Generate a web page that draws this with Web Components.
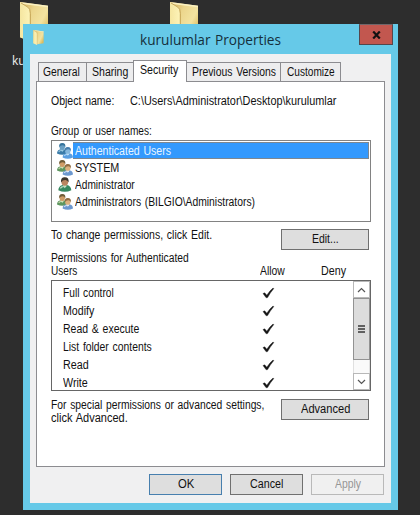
<!DOCTYPE html>
<html lang="en"><head><meta charset="utf-8"><title>kurulumlar Properties</title>
<style>html,body{margin:0;height:100%;overflow:hidden;background:#2d2d2d}body{font:12px/13px "Liberation Sans",Arial,sans-serif;color:#111}</style>
</head><body><desktop-view></desktop-view>
<script>
const define=(name,html,init)=>customElements.define(name,class extends HTMLElement{
  connectedCallback(){
    if(this.shadowRoot)return;
    const t=document.createElement('template');
    t.innerHTML=typeof html==='function'?html(this):html;
    this.attachShadow({mode:'open'}).append(t.content.cloneNode(true));
    if(init)init(this);
  }
});

/* A line of text condensed to an exact width given by "w". */
define('ui-text',`<style>:host{display:block;white-space:pre;width:max-content}span{display:inline-block;transform-origin:0 50%;word-spacing:1px}</style><span><slot></slot></span>`,el=>{
  const w=+el.getAttribute('w');if(!w)return;
  const s=el.shadowRoot.querySelector('span');
  s.style.transform='scaleX('+w/s.offsetWidth+')';
  el.style.width=w+'px';
});

define('folder-icon',`<style>:host{display:block}svg{display:block;width:100%;height:100%}</style>
<svg viewBox="0 0 30 42" preserveAspectRatio="none"><defs><linearGradient id="b"><stop stop-color="#f5e6a0"/><stop offset="1" stop-color="#fdf3b8"/></linearGradient><linearGradient id="c" x2="1" y2=".7"><stop stop-color="#cfa850"/><stop offset=".4" stop-color="#ecd68c"/><stop offset=".75" stop-color="#f3e3a0"/><stop offset="1" stop-color="#dcbc5e"/></linearGradient></defs>
<path d="M1 0L29 4V37L11 40L1 37Z" fill="url(#c)"/><path d="M1 0L29 4V5.5L3 2Z" fill="#fbf1c0"/><path d="M1 0L9 5Q11 7 11 12V42L1 37Z" fill="url(#b)"/><path d="M2 1L9 5.5Q11.3 7 11.3 12V40" fill="none" stroke="#bd9a4b" stroke-width=".9"/></svg>`);

define('people-icon',el=>{
  const k=el.getAttribute('kind');
  const p=(x,y,s,skin,hair,c,l)=>`<g transform="translate(${x} ${y}) scale(${s})"><path d="M0 10Q.2 6.6 3.5 6H6.5Q9.8 6.6 10 10Q5 12.5 0 10Z" fill="${c}"/><path d="M1.6 8.6Q2.4 7.2 4 7.2" fill="none" stroke="${l}"/><path d="M3.5 5.3H6.5L6.2 7L5 8.5L3.8 7Z" fill="${l}"/><ellipse cx="5" cy="3.5" rx="2.6" ry="3.1" fill="${skin}"/><path d="M2.1 4Q1.6 0 5 0Q8.5 0 7.9 4Q7.2 2.3 5.5 2.2Q3.3 2.1 2.1 4Z" fill="${hair}"/></g>`;
  const body=k==='one'?p(1.3,.2,1.3,'#b98560','#3c352b','#35885f','#c1dfc8')
   :k==='blue'?p(0,0,1.05,'#6aa0c4','#37749c','#3a7ba8','#9ccae2')+p(5.6,4,1.04,'#85b7dc','#477ead','#5a9ee0','#b8dcf5')
   :p(0,0,1.05,'#cf9c66','#6f5c38','#5d965f','#d5e1b8')+p(5.6,4,1.04,'#dcb07e','#8f6b42','#6c98cf','#dce8f3');
  return `<style>:host{display:block;width:16px;height:16px;flex:none}svg{display:block}</style><svg width="16" height="16" viewBox="0 0 16 16">${body}</svg>`;
});

define('push-button',`<style>:host{display:flex;box-sizing:border-box;width:88px;height:21px;border:1px solid #707070;background:#dedede;align-items:center;justify-content:center;flex:none}
:host([primary]){border-color:#477fae}:host([disabled]){border-color:#b9b9b9;background:#f0f0f0;color:#969696}:host([small]){width:73px}</style><slot></slot>`);

define('tab-item',`<style>:host{display:flex;box-sizing:border-box;height:19px;border:1px solid #8c8c90;border-left-width:0;border-bottom:0;background:#ededee;align-items:center;justify-content:center;padding-top:1px}
:host([first]){border-left-width:1px;padding-right:2px}:host([active]){height:22px;border-left-width:1px;background:#fff;margin-left:-1px;margin-bottom:-1px;padding:0 2px 2px 0;z-index:1}</style><slot></slot>`);

define('user-row',el=>`<style>:host{display:flex;height:17px;align-items:center}div{flex:1;box-sizing:border-box;height:17px;padding:3px 0 0 2px}
:host([selected]) div{background:#3399fd;color:#e9f5ff;border:1px solid #7d8790;border-left:0;padding-top:2px}</style><people-icon kind="${el.getAttribute('icon')}"></people-icon><div><slot></slot></div>`);

define('permission-row',`<style>:host{display:flex;height:18px;align-items:center}.n{width:199px}svg{display:block}</style><div class="n"><slot></slot></div>
<svg width="13" height="12" viewBox="0 0 13 12"><path d="M1 6.6L2.7 5.8L4.8 8.2Q7.6 3.8 11 1L11.8 1.6Q8.3 5.6 5.6 10.6L4.2 10.8Z" fill="#151515" stroke="#151515" stroke-width=".4"/></svg>`);

define('scroll-bar',`<style>:host{display:flex;flex-direction:column;box-sizing:border-box;width:17px;height:109px;background:#fafafa}
div{box-sizing:border-box;border:1px solid #b8b8b8;display:flex;align-items:center;justify-content:center}.b{height:17px;background:#fff}.t{height:62px;background:#dcdcdc;border-color:#929292}.g{flex:1;border-width:0 1px;border-color:#e0e0e0}svg{display:block}</style>
<div class="b"><svg width="9" height="6"><path d="M1 5L4.5 1.5L8 5" fill="none" stroke="#555" stroke-width="1.2"/></svg></div>
<div class="t"><svg width="7" height="8"><path d="M0 1H7M0 4H7M0 7H7" stroke="#606060" stroke-width="2"/></svg></div><div class="g"></div>
<div class="b"><svg width="9" height="6"><path d="M1 1L4.5 4.5L8 1" fill="none" stroke="#555" stroke-width="1.2"/></svg></div>`);

define('title-bar',`<style>:host{display:grid;grid-template-columns:110px 1fr 34px;height:30px;padding:0 5px 0 7px;align-items:start}
folder-icon{width:11px;height:15px;margin:6px 0 0 3px}.t{font:15px/20px "Open Sans","Noto Sans",sans-serif;color:#152f3b;padding-top:5px}
.x{box-sizing:border-box;height:21px;background:#c2574f;border:1px solid #56464b;border-top-color:#70666a;display:flex;align-items:center;justify-content:center}</style>
<folder-icon></folder-icon><div class="t"><slot></slot></div><div class="x"><svg width="9" height="8"><path d="M1.2 .5L7.8 7.5M7.8 .5L1.2 7.5" stroke="#121212" stroke-width="2.2"/></svg></div>`);

define('security-page',`<style>:host{display:block;box-sizing:border-box;width:349px;height:386px;border:1px solid #8c8c90;background:#fff;padding:13px 13px 0 14px}
.o{display:flex;gap:16px}.gl{margin-top:17px}.users{box-sizing:border-box;width:320px;height:82px;border:1px solid #828282;padding:1px 1px 0 5px;margin-top:2px}
.row{display:flex;justify-content:space-between;width:318px}.edit{margin-top:7px}.heads{display:grid;grid-template-columns:209px 61px auto;align-items:end;margin-top:2px}
.perms{box-sizing:border-box;width:320px;height:111px;border:1px solid #666;margin-top:2px;display:flex;justify-content:space-between}.list{padding:3px 0 0 11px;height:106px;overflow:hidden}.adv{margin-top:8px}</style>
<div class="o"><ui-text w="63">Object name:</ui-text><ui-text w="206">C:\\Users\\Administrator\\Desktop\\kurulumlar</ui-text></div>
<ui-text class="gl" w="101">Group or user names:</ui-text>
<div class="users"><user-row icon="blue" selected><ui-text w="96">Authenticated Users</ui-text></user-row><user-row icon="two"><ui-text w="44">SYSTEM</ui-text></user-row><user-row icon="one"><ui-text w="60">Administrator</ui-text></user-row><user-row icon="two"><ui-text w="180">Administrators (BILGIO\\Administrators)</ui-text></user-row></div>
<div class="row edit"><ui-text w="161">To change permissions, click Edit.</ui-text><push-button><ui-text w="27">Edit...</ui-text></push-button></div>
<div class="heads"><div><ui-text w="138">Permissions for Authenticated</ui-text><ui-text w="26">Users</ui-text></div><ui-text w="25">Allow</ui-text><ui-text w="25">Deny</ui-text></div>
<div class="perms"><div class="list"><permission-row><ui-text w="51">Full control</ui-text></permission-row><permission-row><ui-text w="31">Modify</ui-text></permission-row><permission-row><ui-text w="76">Read &amp; execute</ui-text></permission-row><permission-row><ui-text w="89">List folder contents</ui-text></permission-row><permission-row><ui-text w="26">Read</ui-text></permission-row><permission-row><ui-text w="25">Write</ui-text></permission-row></div><scroll-bar></scroll-bar></div>
<div class="row adv"><div><ui-text w="213">For special permissions or advanced settings,</ui-text><ui-text w="77">click Advanced.</ui-text></div><push-button><ui-text w="49">Advanced</ui-text></push-button></div>`);

define('properties-dialog',`<style>:host{display:block;box-sizing:border-box;width:375px;height:486px;background:#66c9e8}
.client{box-sizing:border-box;margin:0 7px;height:449px;background:#f0f0f1;padding:7px 6px 0}.tabs{display:flex;align-items:flex-end;height:20px;padding-left:2px}
.foot{display:flex;justify-content:flex-end;gap:8px;margin-top:7px;padding-right:1px}</style>
<title-bar><ui-text w="141">kurulumlar Properties</ui-text></title-bar>
<div class="client"><div class="tabs"><tab-item first style="width:49px"><ui-text w="37">General</ui-text></tab-item><tab-item style="width:47px"><ui-text w="36">Sharing</ui-text></tab-item><tab-item active style="width:54px"><ui-text w="38">Security</ui-text></tab-item><tab-item style="width:94px"><ui-text w="84">Previous Versions</ui-text></tab-item><tab-item style="width:60px"><ui-text w="48">Customize</ui-text></tab-item></div>
<security-page></security-page>
<div class="foot"><push-button small primary><ui-text w="16">OK</ui-text></push-button><push-button small><ui-text w="33">Cancel</ui-text></push-button><push-button small disabled><ui-text w="26">Apply</ui-text></push-button></div></div>`);

/* Desktop with shortcuts behind the open window. */
define('desktop-view',`<style>:host{display:block;position:relative;width:420px;height:515px;overflow:hidden;background:#2d2d2d}
folder-icon,.label,properties-dialog{position:absolute}folder-icon{top:2px;width:30px;height:40px}.label{left:12px;top:53px;font:12px/15px "Open Sans",sans-serif;color:#eee}</style>
<folder-icon style="left:19px"></folder-icon><folder-icon style="left:169px"></folder-icon><ui-text class="label">ku</ui-text>
<properties-dialog style="left:23px;top:24px"></properties-dialog>`);
</script></body></html>
